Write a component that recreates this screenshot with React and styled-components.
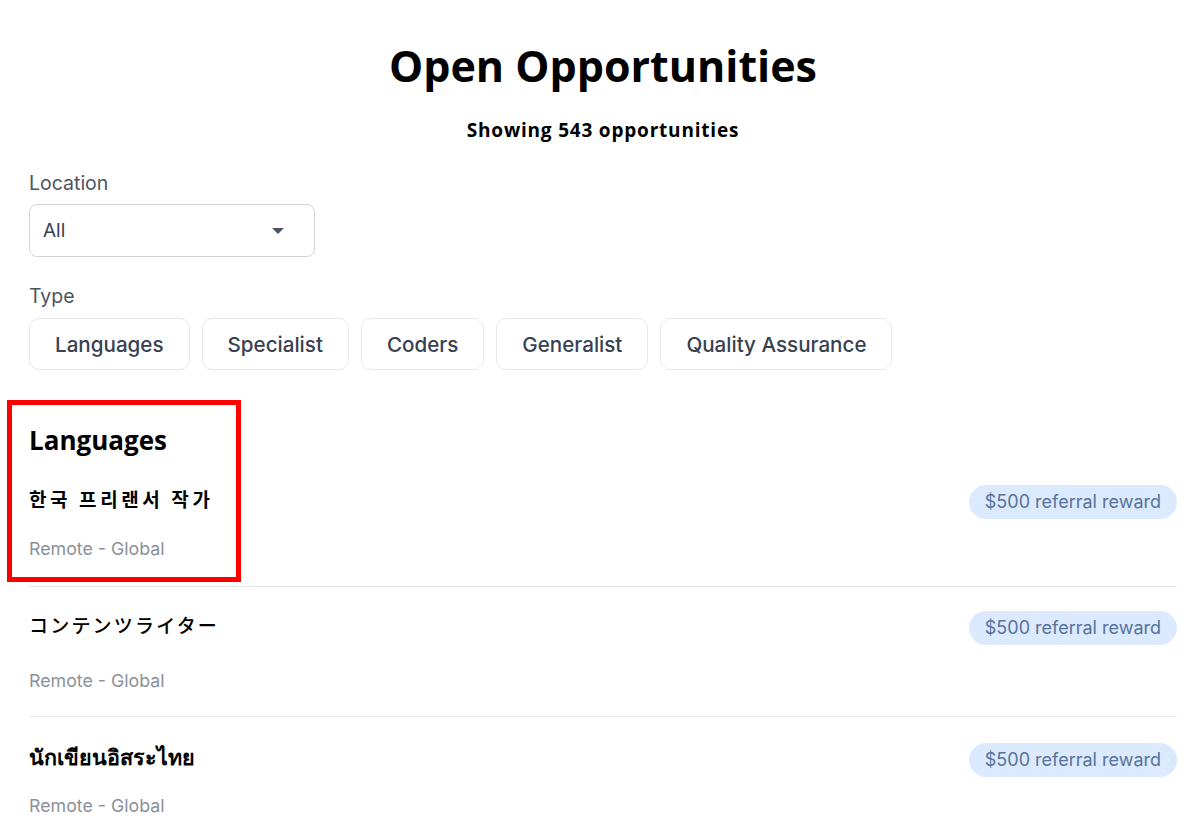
import React, { useState } from "react";
import styled, { createGlobalStyle } from "styled-components";

const GlobalStyle = createGlobalStyle`
  body {
    margin: 0;
    background: #fff;
    font-family: Inter, "Noto Sans", sans-serif;
    color: #111;
  }
`;

const Page = styled.div`
  position: relative;
  padding: 36px 23px 0 29px;
  overflow: hidden;
  height: 830px;
  box-sizing: border-box;
`;

const Title = styled.h1`
  margin: 0;
  text-align: center;
  font-family: "Open Sans", "Noto Sans", sans-serif;
  font-weight: 700;
  font-size: 43px;
  line-height: 60px;
  color: #000;
`;

const Subtitle = styled.p`
  margin: 21px 0 0;
  text-align: center;
  font-family: "Open Sans", "Noto Sans", sans-serif;
  font-weight: 700;
  font-size: 19px;
  line-height: 26px;
  letter-spacing: 0.8px;
  color: #000;
`;

const Field = styled.div`
  margin-top: ${(p) => p.$top || 0}px;
  display: flex;
  flex-direction: column;
  gap: ${(p) => p.$gap || 10}px;
`;

const Label = styled.label`
  font-size: 19.5px;
  line-height: 24px;
  color: #4b5563;
`;

const Select = styled.button`
  width: 286px;
  height: 53px;
  box-sizing: border-box;
  display: flex;
  align-items: center;
  justify-content: space-between;
  padding: 0 30px 0 13px;
  border: 1px solid #d1d5db;
  border-radius: 8px;
  background: #fff;
  font-family: Inter, sans-serif;
  font-size: 19px;
  color: #374151;
  cursor: pointer;
`;

const Caret = styled.span`
  width: 0;
  height: 0;
  border-left: 6px solid transparent;
  border-right: 6px solid transparent;
  border-top: 6px solid #4b5563;
`;

const Chips = styled.div`
  display: flex;
  gap: 12px;
`;

const Chip = styled.button`
  height: 52px;
  padding: 0 25px;
  border: 1px solid #e5e7eb;
  border-radius: 10px;
  background: ${(p) => (p.$active ? "#f3f4f6" : "#fff")};
  font-family: Inter, sans-serif;
  font-weight: 500;
  font-size: 20.6px;
  color: #374151;
  cursor: pointer;
`;

const Section = styled.section`
  margin-top: 54px;
`;

const SectionTitle = styled.h2`
  margin: 0;
  font-family: "Open Sans", "Noto Sans", sans-serif;
  font-weight: 700;
  font-size: 26px;
  line-height: 32px;
  color: #000;
`;

const Job = styled.div`
  display: flex;
  justify-content: space-between;
  align-items: flex-start;
  padding: ${(p) => p.$pad};
  border-bottom: ${(p) => (p.$last ? "none" : "1px solid #e5e7eb")};
`;

const JobInfo = styled.div`
  display: flex;
  flex-direction: column;
  gap: ${(p) => p.$gap}px;
`;

const JobTitle = styled.div`
  font-family: ${(p) => p.$font}, sans-serif;
  font-weight: ${(p) => p.$weight};
  font-size: ${(p) => p.$size}px;
  line-height: 28px;
  letter-spacing: ${(p) => p.$tracking}px;
  color: #000;
`;

const Where = styled.div`
  font-size: 17.8px;
  line-height: 22px;
  color: #8b9199;
`;

const Reward = styled.span`
  padding: 7px 16px;
  border-radius: 999px;
  background: #dbeafe;
  color: #58729a;
  font-size: 18px;
  line-height: 20px;
  white-space: nowrap;
`;

const Highlight = styled.div`
  position: absolute;
  left: 7px;
  top: 400px;
  width: 234px;
  height: 182px;
  box-sizing: border-box;
  border: 5px solid #ff0000;
  pointer-events: none;
`;

const types = ["Languages", "Specialist", "Coders", "Generalist", "Quality Assurance"];

const jobs = [
  { title: "한국 프리랜서 작가", font: '"Noto Sans CJK KR"', size: 19, weight: 700, tracking: 3.6, gap: 25, pad: "29px 0 26px" },
  { title: "コンテンツライター", font: '"Noto Sans CJK JP"', size: 19, weight: 500, tracking: 2.2, gap: 31, pad: "24px 0 24px" },
  { title: "นักเขียนอิสระไทย", font: '"Noto Sans", "DejaVu Sans"', size: 21.5, weight: 700, tracking: 0, gap: 24, pad: "26px 0 24px" },
];

const App = () => {
  const [active, setActive] = useState(null);
  return (
    <Page>
      <GlobalStyle />
      <Title>Open Opportunities</Title>
      <Subtitle>Showing 543 opportunities</Subtitle>

      <Field $top={28} $gap={9}>
        <Label>Location</Label>
        <Select>
          All
          <Caret />
        </Select>
      </Field>

      <Field $top={27}>
        <Label>Type</Label>
        <Chips>
          {types.map((t) => (
            <Chip key={t} $active={active === t} onClick={() => setActive(active === t ? null : t)}>
              {t}
            </Chip>
          ))}
        </Chips>
      </Field>

      <Section>
        <SectionTitle>Languages</SectionTitle>
        {jobs.map((j, i) => (
          <Job key={j.title} $pad={j.pad} $last={i === jobs.length - 1}>
            <JobInfo $gap={j.gap}>
              <JobTitle $font={j.font} $size={j.size} $weight={j.weight} $tracking={j.tracking}>
                {j.title}
              </JobTitle>
              <Where>Remote - Global</Where>
            </JobInfo>
            <Reward>$500 referral reward</Reward>
          </Job>
        ))}
      </Section>

      <Highlight />
    </Page>
  );
};

export default App;
